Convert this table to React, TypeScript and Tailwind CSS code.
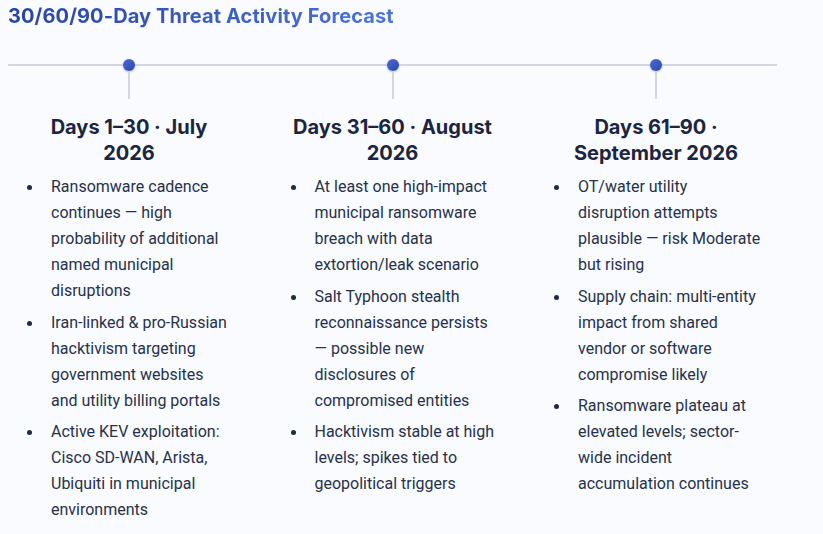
import React from "react";

interface Phase {
  title: string;
  items: string[];
}

const phases: Phase[] = [
  {
    title: "Days 1–30 · July 2026",
    items: [
      "Ransomware cadence continues — high probability of additional named municipal disruptions",
      "Iran-linked & pro-Russian hacktivism targeting government websites and utility billing portals",
      "Active KEV exploitation: Cisco SD-WAN, Arista, Ubiquiti in municipal environments",
    ],
  },
  {
    title: "Days 31–60 · August 2026",
    items: [
      "At least one high-impact municipal ransomware breach with data extortion/leak scenario",
      "Salt Typhoon stealth reconnaissance persists — possible new disclosures of compromised entities",
      "Hacktivism stable at high levels; spikes tied to geopolitical triggers",
    ],
  },
  {
    title: "Days 61–90 · September 2026",
    items: [
      "OT/water utility disruption attempts plausible — risk Moderate but rising",
      "Supply chain: multi-entity impact from shared vendor or software compromise likely",
      "Ransomware plateau at elevated levels; sector-wide incident accumulation continues",
    ],
  },
];

function PhaseColumn({ phase }: { phase: Phase }) {
  return (
    <div className="flex flex-col items-center">
      <span className="-mt-[7px] h-3 w-3 rounded-full bg-gradient-to-br from-[#4a6cd8] to-[#2a48a8] shadow-[0_1px_2px_rgba(30,50,120,0.35)]" />
      <span className="h-[28px] w-[2px] bg-[#d3d6de]" />
      <h3 className="mt-[15px] px-[19px] text-center font-['Inter',sans-serif] text-[20px] font-bold leading-[26px] text-[#1b2541]">
        {phase.title}
      </h3>
      <ul className="mt-[8px] flex w-full flex-col gap-[5.5px] pr-[16.5px] font-['Roboto',sans-serif] text-[16px] leading-[26px] text-[#27314a]">
        {phase.items.map((item) => (
          <li key={item} className="flex">
            <span className="flex w-[43px] shrink-0 justify-start pl-[19px] pt-[11px]">
              <span className="h-[5px] w-[5px] rounded-full bg-[#1f2a44]" />
            </span>
            <span className="flex-1">{item}</span>
          </li>
        ))}
      </ul>
    </div>
  );
}

export default function App() {
  return (
    <div className="min-h-[534px] w-full bg-[#f9fbfe] pl-2 pt-[4px]">
      <div className="w-[769px]">
        <h2 className="w-fit bg-gradient-to-r from-[#2743a1] to-[#4d73da] bg-clip-text font-['Inter',sans-serif] text-[20px] font-bold leading-[25px] tracking-[0.1px] text-transparent">
          30/60/90-Day Threat Activity Forecast
        </h2>
        <div className="mt-[35px] h-[2px] w-full bg-[#d3d6de]" />
        <div className="grid grid-cols-3 gap-x-[21.5px]">
          {phases.map((phase) => (
            <PhaseColumn key={phase.title} phase={phase} />
          ))}
        </div>
      </div>
    </div>
  );
}
